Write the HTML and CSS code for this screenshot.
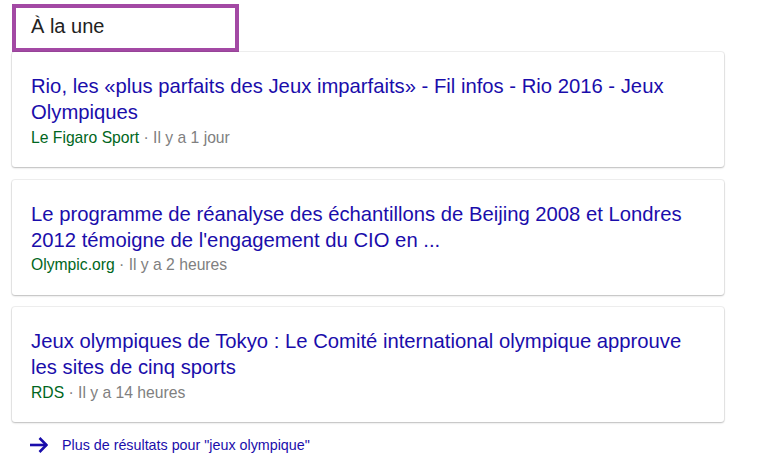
FILE: index.html
```html
<!DOCTYPE html>
<html lang="fr">
<head>
<meta charset="utf-8">
<title>À la une</title>
<link rel="stylesheet" href="styles.css">
</head>
<body>
<div class="wrap">
  <h2 class="heading">À la une</h2>
  <div class="card">
    <a class="title" href="#">Rio, les «plus parfaits des Jeux imparfaits» - Fil infos - Rio 2016 - Jeux Olympiques</a>
    <div class="meta"><span class="src">Le Figaro Sport</span> · Il y a 1 jour</div>
  </div>
  <div class="card">
    <a class="title" href="#">Le programme de réanalyse des échantillons de Beijing 2008 et Londres 2012 témoigne de l'engagement du CIO en ...</a>
    <div class="meta"><span class="src">Olympic.org</span> · Il y a 2 heures</div>
  </div>
  <div class="card">
    <a class="title" href="#">Jeux olympiques de Tokyo : Le Comité international olympique approuve les sites de cinq sports</a>
    <div class="meta"><span class="src">RDS</span> · Il y a 14 heures</div>
  </div>
  <a class="more" href="#">
    <svg class="arrow" width="18" height="16" viewBox="0 0 18 16" aria-hidden="true">
      <path d="M0 8H16.5" stroke="#1a0dab" stroke-width="2.6" fill="none"/>
      <path d="M9.5 1L16.5 8L9.5 15" stroke="#1a0dab" stroke-width="2.6" fill="none"/>
    </svg>
    <span>Plus de résultats pour "jeux olympique"</span>
  </a>
</div>
</body>
</html>
```
FILE: styles.css
```css
html, body {
  margin: 0;
  padding: 0;
  background: #fff;
}
body {
  font-family: Arial, "Liberation Sans", sans-serif;
}
.wrap {
  width: 712px;
  padding: 4px 0 0 12px;
  display: flex;
  flex-direction: column;
}
.heading {
  box-sizing: border-box;
  width: 227px;
  height: 48px;
  margin: 0;
  border: 4px solid #a349a4;
  padding: 7px 0 0 15px;
  font-size: 20px;
  line-height: 22px;
  font-weight: normal;
  color: #222;
}
.card {
  background: #fff;
  border-radius: 3px;
  box-shadow: 0 1px 2px rgba(0,0,0,0.22), 0 0 0 1px rgba(0,0,0,0.06);
  padding: 21px 19px 17px;
  margin-bottom: 12.5px;
  height: 77px;
  box-sizing: content-box;
}
.title {
  display: block;
  font-size: 20.25px;
  line-height: 26.4px;
  color: #1a0dab;
  text-decoration: none;
}
.meta {
  font-size: 15.7px;
  line-height: 24px;
  color: #808080;
}
.src {
  color: #006621;
}
.more {
  display: flex;
  align-items: center;
  gap: 14px;
  padding-left: 18px;
  height: 20px;
  font-size: 14.3px;
  color: #1a0dab;
  text-decoration: none;
}
.arrow {
  flex: none;
  display: block;
}
```
